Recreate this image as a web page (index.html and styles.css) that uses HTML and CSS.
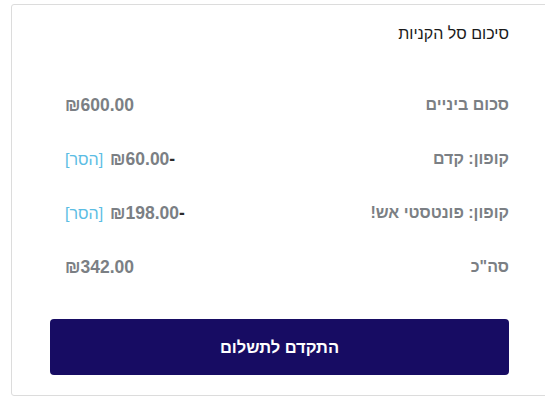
FILE: index.html
```html
<!DOCTYPE html>
<html lang="he">
<head>
<meta charset="utf-8">
<link rel="stylesheet" href="styles.css">
</head>
<body>
<div class="card" dir="rtl">
  <h2 class="title">סיכום סל הקניות</h2>
  <div class="rows">
    <div class="row">
      <span class="label">סכום ביניים</span>
      <span class="value" dir="ltr"><span class="amt">₪600.00</span></span>
    </div>
    <div class="row">
      <span class="label">קופון: קדם</span>
      <span class="value" dir="ltr"><a class="remove">[הסר]</a><span class="amt">₪60.00</span><span class="minus">-</span></span>
    </div>
    <div class="row">
      <span class="label">קופון: פונטסטי אש!</span>
      <span class="value" dir="ltr"><a class="remove">[הסר]</a><span class="amt">₪198.00</span><span class="minus">-</span></span>
    </div>
    <div class="row">
      <span class="label">סה"כ</span>
      <span class="value" dir="ltr"><span class="amt">₪342.00</span></span>
    </div>
  </div>
  <button class="checkout">התקדם לתשלום</button>
</div>
</body>
</html>
```
FILE: styles.css
```css
html, body {
  margin: 0;
  padding: 0;
  overflow: hidden;
  background: #fff;
}
body {
  font-family: "Liberation Sans", Arial, sans-serif;
  font-size: 16px;
  color: #222;
}
.card {
  box-sizing: border-box;
  margin: 4px 0 0 11px;
  width: 537px;
  height: 392px;
  border: 1px solid #dcdcdc;
  border-radius: 3px;
  padding: 17px 38px 19px 38px;
  display: flex;
  flex-direction: column;
}
.title {
  margin: 0;
  font-size: 16px;
  font-weight: normal;
  line-height: 24px;
  color: #1a1a1a;
}
.rows {
  margin-top: 32px;
  display: flex;
  flex-direction: column;
  padding-left: 15px;
}
.row {
  height: 54px;
  display: flex;
  align-items: center;
  justify-content: space-between;
  font-weight: bold;
  color: #7b7f84;
}
.value {
  display: flex;
  align-items: baseline;
}
.amt {
  font-size: 17.5px;
}
.remove {
  color: #5bbde4;
  font-weight: normal;
  margin-right: 7px;
}
.minus {
  color: #2b2b2b;
  font-size: 17.5px;
}
.checkout {
  margin-top: 25px;
  height: 56px;
  width: 100%;
  border: none;
  border-radius: 4px;
  background: #170c63;
  color: #fff;
  font-family: "Liberation Sans", Arial, sans-serif;
  font-size: 16.5px;
  font-weight: bold;
}
```
